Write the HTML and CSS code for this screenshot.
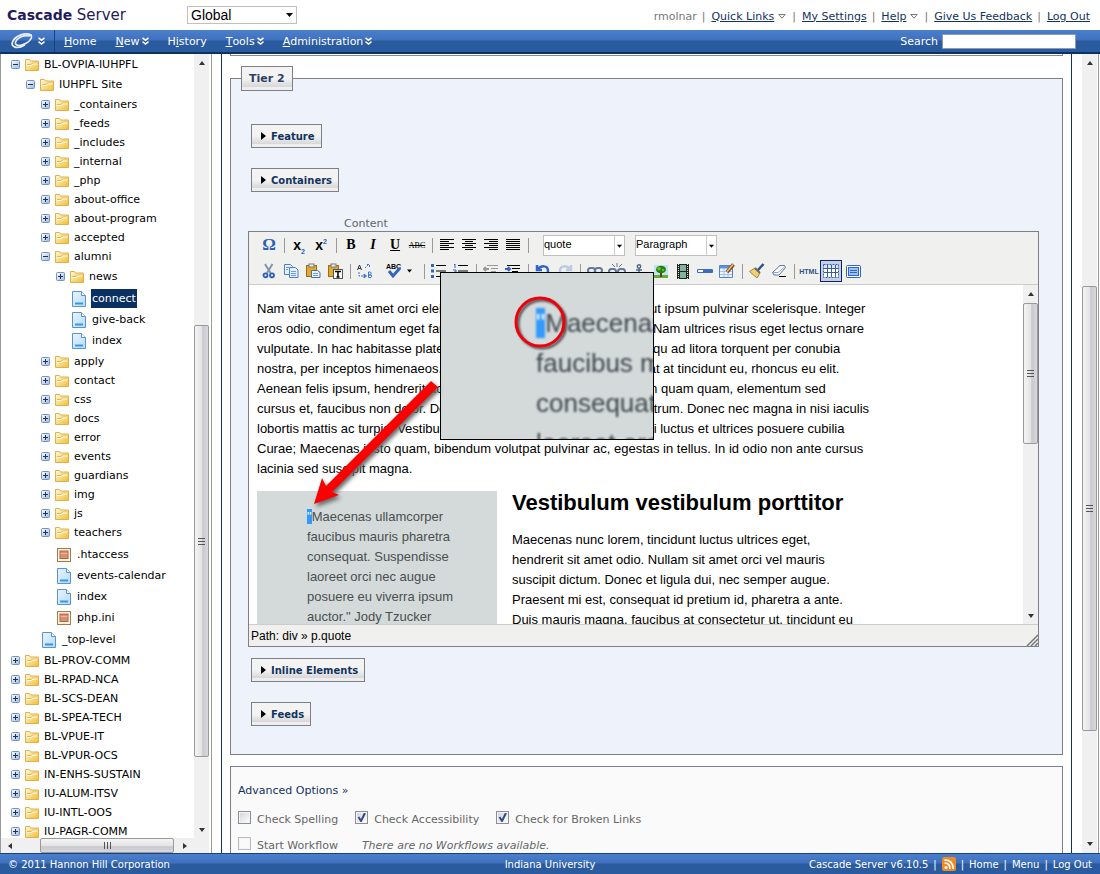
FILE: index.html
```html
<!DOCTYPE html>
<html lang="en">
<head>
    <meta charset="utf-8">
    <title>Cascade Server</title>
    <link rel="stylesheet" href="styles.css">
</head>
<body>
    <!-- shared icons -->
    <svg class="sprite" aria-hidden="true">
        <defs>
            <linearGradient id="gFolder" x1="0" y1="0" x2="1" y2="1"><stop offset="0" stop-color="#fffbe0"/><stop offset="1" stop-color="#f3bd2e"/></linearGradient>
            <linearGradient id="gBox" x1="0" y1="0" x2="1" y2="1"><stop offset="0" stop-color="#fff"/><stop offset="1" stop-color="#9db9dd"/></linearGradient>
            <linearGradient id="gPage" x1="0" y1="0" x2="1" y2="1"><stop offset="0" stop-color="#e8f4ff"/><stop offset="1" stop-color="#b9dbfa"/></linearGradient>
        </defs>
        <symbol id="plus" viewBox="0 0 9 9"><rect x=".5" y=".5" width="8" height="8" rx="1" fill="url(#gBox)" stroke="#7891b5"/><path d="M2 4.500h5M4.500 2v5" stroke="#14336b"/></symbol>
        <symbol id="minus" viewBox="0 0 9 9"><rect x=".5" y=".5" width="8" height="8" rx="1" fill="url(#gBox)" stroke="#7891b5"/><path d="M2 4.500h5" stroke="#14336b"/></symbol>
        <symbol id="folder" viewBox="0 0 14 12"><path d="M.5 11.500v-11h4l1 1.500h8v9.500z" fill="url(#gFolder)" stroke="#dfb04e"/><path d="M2 5.500h4l1.500-1.500h4" fill="none" stroke="#e9b845"/><path d="M2 6.500h4.500l1.500-1.500h4" fill="none" stroke="#fff"/></symbol>
        <symbol id="page" viewBox="0 0 14 16"><path d="M.5 .5h9l4 4v11h-13z" fill="url(#gPage)" stroke="#5b93d0"/><path d="M9.500 .5v4h4" fill="#fff" stroke="#5b93d0"/><path d="M3 12.500h8" stroke="#2f9be6" stroke-width="2"/></symbol>
        <symbol id="file" viewBox="0 0 14 14"><rect x=".5" y=".5" width="13" height="13" fill="#fdf3df" stroke="#a8784e"/><rect x="3" y="3" width="8" height="7.500" fill="#dd8f6c" stroke="#a86c4e"/><path d="M3.500 5.500h7" stroke="#efb79b"/></symbol>
        <symbol id="chev" viewBox="0 0 7 8"><path d="M.5 .8l3 2.400 3-2.400M.5 4.600l3 2.400 3-2.400" fill="none" stroke="#fff" stroke-width="1.500"/></symbol>
        <symbol id="tri" viewBox="0 0 8 5"><path d="M.8 .5h6.400L4 4.200z" fill="#fff" stroke="#777"/></symbol>
        <symbol id="arrow" viewBox="0 0 7 4"><path d="M0 0h7L3.500 4z"/></symbol>
    </svg>

    <header class="header">
        <div class="logo"><b>Cascade</b> <span>Server</span></div>
        <select class="site-select" aria-label="Site"><option>Global</option></select>
        <nav class="user-links">
            <span>rmolnar</span><i>|</i><a href="#">Quick Links</a><svg class="tri"><use href="#tri"/></svg><i>|</i><a href="#">My Settings</a><i>|</i><a href="#">Help</a><svg class="tri"><use href="#tri"/></svg><i>|</i><a href="#">Give Us Feedback</a><i>|</i><a href="#">Log Out</a>
        </nav>
    </header>

    <div class="menubar">
        <a class="brand" href="#" aria-label="Cascade menu">
            <svg width="23" height="17" viewBox="0 0 23 17"><g fill="none" stroke="#e8eefb" stroke-linecap="round"><path d="M20 2C14-1 4 3 1.500 9c-2 6 6 7 12 3" stroke-width="1.800"/><path d="M18 3C12 2 6 5 4.500 9c-1 4 5 4.500 10 1.500 6-3 8-8 4-9" stroke-width="1.600"/><path d="M8 5c4-3 10-4 12-2" stroke-width="1"/></g></svg>
            <svg class="chev"><use href="#chev"/></svg>
        </a>
        <nav class="menu">
            <a href="#"><u>H</u>ome</a>
            <a href="#"><u>N</u>ew <svg class="chev"><use href="#chev"/></svg></a>
            <a href="#">H<u>i</u>story</a>
            <a href="#"><u>T</u>ools <svg class="chev"><use href="#chev"/></svg></a>
            <a href="#"><u>A</u>dministration <svg class="chev"><use href="#chev"/></svg></a>
        </nav>
        <label for="search">Search</label>
        <input id="search" class="search" type="text">
    </div>

    <div class="main">
        <aside class="sidebar">
            <div class="tree-wrap">
                <ul class="tree">
                    <li><a href="#"><svg class="tg"><use href="#minus"/></svg><svg class="fd"><use href="#folder"/></svg>BL-OVPIA-IUHPFL</a>
                        <ul>
                            <li><a href="#"><svg class="tg"><use href="#minus"/></svg><svg class="fd"><use href="#folder"/></svg>IUHPFL Site</a>
                                <ul>
                                    <li><a href="#"><svg class="tg"><use href="#plus"/></svg><svg class="fd"><use href="#folder"/></svg>_containers</a></li>
                                    <li><a href="#"><svg class="tg"><use href="#plus"/></svg><svg class="fd"><use href="#folder"/></svg>_feeds</a></li>
                                    <li><a href="#"><svg class="tg"><use href="#plus"/></svg><svg class="fd"><use href="#folder"/></svg>_includes</a></li>
                                    <li><a href="#"><svg class="tg"><use href="#plus"/></svg><svg class="fd"><use href="#folder"/></svg>_internal</a></li>
                                    <li><a href="#"><svg class="tg"><use href="#plus"/></svg><svg class="fd"><use href="#folder"/></svg>_php</a></li>
                                    <li><a href="#"><svg class="tg"><use href="#plus"/></svg><svg class="fd"><use href="#folder"/></svg>about-office</a></li>
                                    <li><a href="#"><svg class="tg"><use href="#plus"/></svg><svg class="fd"><use href="#folder"/></svg>about-program</a></li>
                                    <li><a href="#"><svg class="tg"><use href="#plus"/></svg><svg class="fd"><use href="#folder"/></svg>accepted</a></li>
                                    <li><a href="#"><svg class="tg"><use href="#minus"/></svg><svg class="fd"><use href="#folder"/></svg>alumni</a>
                                        <ul>
                                            <li><a href="#"><svg class="tg"><use href="#plus"/></svg><svg class="fd"><use href="#folder"/></svg>news</a></li>
                                            <li class="leaf first"><a href="#"><svg class="pg"><use href="#page"/></svg><span class="selected">connect</span></a></li>
                                            <li class="leaf"><a href="#"><svg class="pg"><use href="#page"/></svg><span>give-back</span></a></li>
                                            <li class="leaf"><a href="#"><svg class="pg"><use href="#page"/></svg><span>index</span></a></li>
                                        </ul>
                                    </li>
                                    <li><a href="#"><svg class="tg"><use href="#plus"/></svg><svg class="fd"><use href="#folder"/></svg>apply</a></li>
                                    <li><a href="#"><svg class="tg"><use href="#plus"/></svg><svg class="fd"><use href="#folder"/></svg>contact</a></li>
                                    <li><a href="#"><svg class="tg"><use href="#plus"/></svg><svg class="fd"><use href="#folder"/></svg>css</a></li>
                                    <li><a href="#"><svg class="tg"><use href="#plus"/></svg><svg class="fd"><use href="#folder"/></svg>docs</a></li>
                                    <li><a href="#"><svg class="tg"><use href="#plus"/></svg><svg class="fd"><use href="#folder"/></svg>error</a></li>
                                    <li><a href="#"><svg class="tg"><use href="#plus"/></svg><svg class="fd"><use href="#folder"/></svg>events</a></li>
                                    <li><a href="#"><svg class="tg"><use href="#plus"/></svg><svg class="fd"><use href="#folder"/></svg>guardians</a></li>
                                    <li><a href="#"><svg class="tg"><use href="#plus"/></svg><svg class="fd"><use href="#folder"/></svg>img</a></li>
                                    <li><a href="#"><svg class="tg"><use href="#plus"/></svg><svg class="fd"><use href="#folder"/></svg>js</a></li>
                                    <li><a href="#"><svg class="tg"><use href="#plus"/></svg><svg class="fd"><use href="#folder"/></svg>teachers</a></li>
                                    <li class="leaf first"><a href="#"><svg class="pg"><use href="#file"/></svg><span>.htaccess</span></a></li>
                                    <li class="leaf"><a href="#"><svg class="pg"><use href="#page"/></svg><span>events-calendar</span></a></li>
                                    <li class="leaf"><a href="#"><svg class="pg"><use href="#page"/></svg><span>index</span></a></li>
                                    <li class="leaf"><a href="#"><svg class="pg"><use href="#file"/></svg><span>php.ini</span></a></li>
                                </ul>
                            </li>
                            <li class="leaf"><a href="#"><svg class="pg"><use href="#page"/></svg><span>_top-level</span></a></li>
                        </ul>
                    </li>
                    <li><a href="#"><svg class="tg"><use href="#plus"/></svg><svg class="fd"><use href="#folder"/></svg>BL-PROV-COMM</a></li>
                    <li><a href="#"><svg class="tg"><use href="#plus"/></svg><svg class="fd"><use href="#folder"/></svg>BL-RPAD-NCA</a></li>
                    <li><a href="#"><svg class="tg"><use href="#plus"/></svg><svg class="fd"><use href="#folder"/></svg>BL-SCS-DEAN</a></li>
                    <li><a href="#"><svg class="tg"><use href="#plus"/></svg><svg class="fd"><use href="#folder"/></svg>BL-SPEA-TECH</a></li>
                    <li><a href="#"><svg class="tg"><use href="#plus"/></svg><svg class="fd"><use href="#folder"/></svg>BL-VPUE-IT</a></li>
                    <li><a href="#"><svg class="tg"><use href="#plus"/></svg><svg class="fd"><use href="#folder"/></svg>BL-VPUR-OCS</a></li>
                    <li><a href="#"><svg class="tg"><use href="#plus"/></svg><svg class="fd"><use href="#folder"/></svg>IN-ENHS-SUSTAIN</a></li>
                    <li><a href="#"><svg class="tg"><use href="#plus"/></svg><svg class="fd"><use href="#folder"/></svg>IU-ALUM-ITSV</a></li>
                    <li><a href="#"><svg class="tg"><use href="#plus"/></svg><svg class="fd"><use href="#folder"/></svg>IU-INTL-OOS</a></li>
                    <li><a href="#"><svg class="tg"><use href="#plus"/></svg><svg class="fd"><use href="#folder"/></svg>IU-PAGR-COMM</a></li>
                </ul>
                <div class="vscroll side-scroll"><span class="up"></span><span class="thumb"></span><span class="down"></span></div>
            </div>
            <div class="hscroll"><span class="left"></span><span class="thumb"></span><span class="right"></span></div>
        </aside>

        <div class="content">
            <div class="panel">
                <div class="tier-end"></div>

                <fieldset class="tier">
                    <legend>Tier 2</legend>
                    <button type="button" class="toggle">Feature</button>
                    <button type="button" class="toggle">Containers</button>
                    <div class="field-label" id="contentLabel">Content</div>

                    <div class="editor" aria-labelledby="contentLabel">
                        <div class="toolbar">
                            <div class="row">
                                <button type="button" class="omega" aria-label="Special character">Ω</button>
                                <span class="sep"></span>
                                <button type="button" class="script" aria-label="Subscript">x<sub>2</sub></button>
                                <button type="button" class="script" aria-label="Superscript">x<sup>2</sup></button>
                                <span class="sep"></span>
                                <button type="button" class="fmt"><b>B</b></button>
                                <button type="button" class="fmt"><i>I</i></button>
                                <button type="button" class="fmt"><u>U</u></button>
                                <button type="button" class="strike"><s>ABC</s></button>
                                <span class="sep"></span>
                                <button type="button" aria-label="Align left"><svg width="16" height="12"><path d="M1 .5h14M1 2.500h9M1 4.500h14M1 6.500h9M1 8.500h14M1 10.500h9" stroke="#000"/></svg></button>
                                <button type="button" aria-label="Align center"><svg width="16" height="12"><path d="M1 .5h14M4 2.500h8M1 4.500h14M4 6.500h8M1 8.500h14M4 10.500h8" stroke="#000"/></svg></button>
                                <button type="button" aria-label="Align right"><svg width="16" height="12"><path d="M1 .5h14M6 2.500h9M1 4.500h14M6 6.500h9M1 8.500h14M6 10.500h9" stroke="#000"/></svg></button>
                                <button type="button" aria-label="Justify"><svg width="16" height="12"><path d="M1 .5h14M1 2.500h14M1 4.500h14M1 6.500h14M1 8.500h14M1 10.500h14" stroke="#000"/></svg></button>
                                <span class="sep"></span>
                                <select aria-label="Style"><option>quote</option></select>
                                <select aria-label="Format"><option>Paragraph</option></select>
                            </div>
                            <div class="row">
                                <button type="button" aria-label="Cut"><svg width="16" height="16"><path d="M4 1l5.500 9M11.500 1L6 10" stroke="#8494ab" stroke-width="2"/><g fill="none" stroke="#2b5cbd" stroke-width="1.800"><circle cx="4.500" cy="12.300" r="2"/><circle cx="11" cy="12.300" r="2"/></g></svg></button>
                                <button type="button" aria-label="Copy"><svg width="16" height="16"><g fill="#e6f0ff" stroke="#4b7fcc"><path d="M1.500 1.500h6l2 2v8h-8z"/><path d="M6.500 4.500h6l2.500 2.500v7.500H6.500z"/></g><path d="M3 4.500h3M3 6.500h2M8 8.500h5M8 10.500h5M8 12.500h5" stroke="#6c9be0"/></svg></button>
                                <button type="button" aria-label="Paste"><svg width="16" height="16"><rect x="1.500" y="2.500" width="10" height="11" fill="#e3a92c" stroke="#94701d"/><rect x="4" y="1" width="5" height="3" fill="#eee" stroke="#777"/><path d="M6.500 7.500h6l2.500 2v5H6.500z" fill="#e9f2ff" stroke="#4b6fa8"/><path d="M8 10.500h5M8 12.500h5" stroke="#6c9be0"/></svg></button>
                                <button type="button" aria-label="Paste as text"><svg width="16" height="16"><rect x="1.500" y="2.500" width="10" height="11" fill="#e3a92c" stroke="#94701d"/><rect x="4" y="1" width="5" height="3" fill="#eee" stroke="#777"/><rect x="6.500" y="6.500" width="9" height="9" fill="#fff" stroke="#555"/><path d="M8 8.500h6M11 8v6M9.500 14h3" stroke="#000" stroke-width="1.500"/></svg></button>
                                <span class="sep"></span>
                                <button type="button" aria-label="Find and replace"><svg width="18" height="16" fill="none" stroke="#3e74cf"><path d="M1.500 7l2-5 2 5M2.200 5.500h2.600" stroke="#334"/><path d="M12.500 9v5.500h2.500q1.500-1.500 0-2.500h-2.500h2q1.500-1.500 0-3z"/><path d="M3 9v4h5" stroke-dasharray="2 1"/><path d="M9 5l3-3M11 1.500h2.500V5" stroke-dasharray="2 1"/><path d="M8 11l2.500 2L8 15z" fill="#3e74cf"/></svg></button>
                                <button type="button" class="wide" aria-label="Spell check"><svg width="18" height="18"><text x="1" y="7" class="abc">ABC</text><path d="M4 9l4 5 7-8" fill="none" stroke="#3465bd" stroke-width="3"/></svg><svg class="drop"><use href="#arrow"/></svg></button>
                                <span class="sep"></span>
                                <button type="button" aria-label="Bullets"><svg width="16" height="14"><path d="M0 1.500h3M0 7h3M0 12.500h3" stroke="#3465bd" stroke-width="3"/><path d="M5 1.500h10M5 7h10M5 12.500h10" stroke="#000"/></svg></button>
                                <button type="button" aria-label="Numbering"><svg width="16" height="14"><path d="M2 0v4M1 .5h1M0 6h3v2H1v2h3" fill="none" stroke="#3465bd"/><path d="M5 1.500h10M5 7h10M5 12.500h10" stroke="#000"/></svg></button>
                                <span class="sep"></span>
                                <button type="button" aria-label="Outdent"><svg width="16" height="14" stroke="#999"><path d="M4 1.500h11M8 4.500h7M8 7.500h5M2 10.500h13"/><path d="M6 5H1m2-2L1 5l2 2" fill="none" stroke-width="2"/></svg></button>
                                <button type="button" aria-label="Indent"><svg width="16" height="14" stroke="#000"><path d="M2 1.500h13M7 4.500h8M7 7.500h6M2 10.500h13"/><path d="M0 5h5M3 3l2 2-2 2" fill="none" stroke="#3465bd" stroke-width="2"/></svg></button>
                                <span class="sep"></span>
                                <button type="button" aria-label="Undo"><svg width="16" height="14" fill="none" stroke="#2f66c8" stroke-width="2.500"><path d="M2 1v5h5M2 6c4-5 11-5 11 1q0 4-4 5"/></svg></button>
                                <button type="button" aria-label="Redo"><svg width="16" height="14" fill="none" stroke="#bccbe3" stroke-width="2.500"><path d="M14 1v5H9M14 6C10 1 3 1 3 7q0 4 4 5"/></svg></button>
                                <span class="sep"></span>
                                <button type="button" aria-label="Link"><svg width="16" height="14" fill="none" stroke="#64799a" stroke-width="2"><rect x="1" y="4" width="7" height="5" rx="2.500"/><rect x="8" y="4" width="7" height="5" rx="2.500"/></svg></button>
                                <button type="button" aria-label="Unlink"><svg width="18" height="16" fill="none" stroke="#64799a" stroke-width="2"><rect x="1" y="6" width="7" height="5" rx="2.500"/><rect x="10" y="6" width="7" height="5" rx="2.500"/><path d="M4 1l3 3M9 0v4M14 1l-3 3" stroke-width="1"/></svg></button>
                                <button type="button" aria-label="Anchor"><svg width="14" height="14" fill="none" stroke="#51688e" stroke-width="1.500"><circle cx="7" cy="2.500" r="1.700"/><path d="M7 4v9M4 6h6M1 8q1 5 6 5t6-5"/></svg></button>
                                <button type="button" aria-label="Image"><svg width="14" height="13"><path fill="#c3e2f5" d="M0 0h14v13H0z"/><path fill="#62ac32" d="M0 10h14v3H0z"/><path d="M7 6v6" stroke="#6a3b12" stroke-width="2"/><ellipse cx="7" cy="4.500" rx="5" ry="3.800" fill="#25820d"/><circle cx="5" cy="3.800" r="1.800" fill="#6cc039"/><circle cx="9" cy="5" r="1.300" fill="#5eb52f"/></svg></button>
                                <button type="button" aria-label="Media"><svg width="12" height="15"><path fill="#222" d="M0 0h12v15H0z"/><path d="M1.500 0v15M10.500 0v15" stroke="#ddd" stroke-dasharray="1 1"/><path fill="#7fb59b" d="M3 1h6v6H3zM3 8h6v6H3z"/></svg></button>
                                <button type="button" aria-label="Horizontal rule"><svg width="16" height="6"><path d="M.5 1.500h15v3H.5z" fill="#fff" stroke="#3a6cc4"/><path fill="#3a6cc4" d="M6 1h9v4H6z"/></svg></button>
                                <button type="button" aria-label="Table"><svg width="16" height="16"><path d="M.5 2.500h13v12H.5z" fill="#eef5ff" stroke="#5583cb"/><path fill="#5e90df" d="M1 3h12v2.500H1z"/><path d="M1 8.500h12M1 11.500h12M5 5v9M9 5v9" stroke="#a5c0ea"/><path d="M14.500 1.500L8 9" stroke="#7a4a22" stroke-width="3.500"/><path d="M14 1.500L8 8.500" stroke="#f0c36e" stroke-width="1.500"/></svg></button>
                                <span class="sep"></span>
                                <button type="button" aria-label="Clean up"><svg width="16" height="16"><path d="M14.500 1L9 7" stroke="#2c4f93" stroke-width="2.500"/><path d="M6 5l5 5-3 5L.5 8.500z" fill="#efd171" stroke="#a18633"/><path d="M6 5l5 5" stroke="#666" stroke-width="2"/></svg></button>
                                <button type="button" aria-label="Remove formatting"><svg width="16" height="14"><path d="M9 1.500h4.500l1 2-6.500 7.500H3L1.500 8.500z" fill="#fff" stroke="#5d75a5"/><path d="M2 8.500h5l7-6" fill="none" stroke="#91a5cc"/><path d="M8 12.500h7" stroke="#000"/></svg></button>
                                <span class="sep"></span>
                                <button type="button" class="html">HTML</button>
                                <button type="button" class="active" aria-label="Guidelines"><svg width="16" height="14"><path d="M.5 .5h15v13H.5z" fill="#fff" stroke="#3d5f9c" stroke-dasharray="2 1"/><path d="M1 1h14v3H1z" fill="#d5e3fa"/><path d="M1 4.500h14M1 8.500h14M4.500 1v12M8.500 1v12M12.500 1v12" stroke="#3d5f9c"/></svg></button>
                                <button type="button" aria-label="Full screen"><svg width="15" height="13"><rect x=".5" y=".5" width="14" height="12" rx="1" fill="#fff" stroke="#2e66c1"/><rect x="2.500" y="2.500" width="10" height="8" fill="#9cc0f5" stroke="#2e66c1"/><path d="M4 5.500h7M4 7.500h7" stroke="#2e66c1"/></svg></button>
                            </div>
                        </div>

                        <div class="doc-wrap">
                            <div class="doc">
                                <p>Nam vitae ante sit amet orci eleifend tristique. Integer sed at magna ut ipsum pulvinar scelerisque. Integer<br>
                                eros odio, condimentum eget faucibus vitae, fermentum vitae ac elit. Nam ultrices risus eget lectus ornare<br>
                                vulputate. In hac habitasse platea dictumst. Class aptent taciti sociosqu ad litora torquent per conubia<br>
                                nostra, per inceptos himenaeos. Praesent tellus nisl, faucibus volutpat at tincidunt eu, rhoncus eu elit.<br>
                                Aenean felis ipsum, hendrerit ac dapibus sed, aliquam in augue. Nam quam quam, elementum sed<br>
                                cursus et, faucibus non dolor. Donec at mauris sed id lacus dictum rutrum. Donec nec magna in nisi iaculis<br>
                                lobortis mattis ac turpis. Vestibulum ante ipsum primis in faucibus orci luctus et ultrices posuere cubilia<br>
                                Curae; Maecenas justo quam, bibendum volutpat pulvinar ac, egestas in tellus. In id odio non ante cursus<br>
                                lacinia sed suscipit magna.</p>
                                <div class="columns">
                                    <blockquote><mark>"</mark>Maecenas ullamcorper<br>faucibus mauris pharetra<br>consequat. Suspendisse<br>laoreet orci nec augue<br>posuere eu viverra ipsum<br>auctor." Jody Tzucker</blockquote>
                                    <div>
                                        <h2>Vestibulum vestibulum porttitor</h2>
                                        <p>Maecenas nunc lorem, tincidunt luctus ultrices eget,<br>
                                        hendrerit sit amet odio. Nullam sit amet orci vel mauris<br>
                                        suscipit dictum. Donec et ligula dui, nec semper augue.<br>
                                        Praesent mi est, consequat id pretium id, pharetra a ante.<br>
                                        Duis mauris magna, faucibus at consectetur ut, tincidunt eu</p>
                                    </div>
                                </div>
                            </div>
                            <div class="vscroll doc-scroll"><span class="up"></span><span class="thumb"></span><span class="down"></span></div>
                        </div>

                        <div class="path">Path: div » p.quote
                            <svg width="12" height="12"><path d="M1 12L12 1M5 12l7-7M9 12l3-3" stroke="#777" stroke-width="1.500"/></svg>
                        </div>

                        <!-- magnified view of the selected quote mark -->
                        <div class="callout">
                            <div class="zoomed"><mark>"</mark>Maecenas<br>faucibus mauris<br>consequat.<br>laoreet orci</div>
                            <svg width="60" height="60"><circle cx="30" cy="30" r="24" fill="none" stroke="#f0000b" stroke-width="3"/></svg>
                        </div>
                        <svg class="pointer" width="136" height="142"><path d="M123 10l7 6L24 121l7 3-25 9 8-26 4 8z" fill="#fb0000"/></svg>
                    </div>

                    <button type="button" class="toggle">Inline Elements</button>
                    <button type="button" class="toggle">Feeds</button>
                </fieldset>

                <div class="options">
                    <a href="#">Advanced Options »</a>
                    <div class="checks">
                        <label><input type="checkbox">Check Spelling</label>
                        <label><input type="checkbox" checked>Check Accessibility</label>
                        <label><input type="checkbox" checked>Check for Broken Links</label>
                    </div>
                    <div class="checks workflow">
                        <label><input type="checkbox" disabled>Start Workflow</label>
                        <em>There are no Workflows available.</em>
                    </div>
                </div>
            </div>
            <div class="vscroll page-scroll"><span class="up"></span><span class="thumb"></span><span class="down"></span></div>
        </div>
    </div>

    <footer class="footer">
        <span>© 2011 Hannon Hill Corporation</span>
        <span class="org">Indiana University</span>
        <span class="foot-links">Cascade Server v6.10.5 <i>|</i>
            <svg width="14" height="14"><rect width="14" height="14" rx="2" fill="#f08a24"/><circle cx="4" cy="10.500" r="1.500" fill="#fff"/><path d="M2.500 6q5.500 0 5.500 6M2.500 2.800Q11 3 11.200 12" fill="none" stroke="#fff" stroke-width="1.700"/></svg>
            <i>|</i> <a href="#">Home</a> <i>|</i> <a href="#">Menu</a> <i>|</i> <a href="#">Log Out</a></span>
    </footer>
</body>
</html>
```

FILE: styles.css
```css
* {
    box-sizing: border-box;
}
body {
    margin: 0;
    height: 100vh;
    display: flex;
    flex-direction: column;
    overflow: hidden;
    font-family: "DejaVu Sans", Verdana, sans-serif;
    font-size: 11px;
    color: #000;
    background-color: #fff;
}
svg {
    display: block;
    flex: none;
}
.sprite {
    position: absolute;
    width: 0;
    height: 0;
}
button {
    font-family: inherit;
    cursor: pointer;
}

/* header */
.header {
    flex: none;
    height: 30px;
    display: flex;
    align-items: center;
    padding: 0 10px 0 7px;
}
.logo {
    width: 180px;
    font-size: 14px;
    color: #1f1a5e;
    white-space: nowrap;
}
.logo span {
    font-size: 15px;
}
select {
    appearance: none;
    border-radius: 0;
    border: 1px solid #c0c0c0;
    color: #000;
    font-family: "Liberation Sans", Arial, sans-serif;
    background: #fff url("data:image/svg+xml,%3Csvg xmlns='http://www.w3.org/2000/svg' width='7' height='4'%3E%3Cpath d='M0 0h7L3.500 4z'/%3E%3C/svg%3E") no-repeat right 3px center;
}
.site-select {
    width: 110px;
    height: 18px;
    padding: 0 3px;
    font-size: 14px;
}
.user-links {
    margin-left: auto;
    display: flex;
    align-items: center;
    color: #777;
    padding-top: 2px;
}
.user-links i {
    font-style: normal;
    margin: 0 6px 0 5px;
}
.user-links a {
    color: #12335f;
}
.tri {
    width: 8px;
    height: 5px;
    margin: 0 1px 0 4px;
}

/* menu bar */
.menubar {
    flex: none;
    height: 24px;
    display: flex;
    align-items: center;
    padding-right: 24px;
    color: #fff;
    background: linear-gradient(#4a7fcd 0, #3f70bd 10px, #2a5b9f 11px, #2a5b9f 20px);
    border-bottom: 2px solid #0b3265;
}
.menubar a {
    color: #fff;
    text-decoration: none;
    display: flex;
    align-items: center;
}
.brand {
    width: 55px;
    height: 22px;
    padding-left: 11px;
    gap: 4px;
    border-right: 1px solid #17427f;
}
.chev {
    width: 7px;
    height: 8px;
}
.menu {
    display: flex;
    gap: 19px;
    margin-left: 9px;
}
.menu .chev {
    margin-left: 2px;
}
.menubar label {
    margin-left: auto;
}
.search {
    width: 134px;
    height: 15px;
    margin-left: 4px;
    border: 1px solid #8b9cba;
    background-color: #fff;
}

/* scrollbars */
.vscroll {
    flex: none;
    width: 15px;
    display: grid;
    background-color: #f0f0f0;
}
.vscroll .thumb {
    grid-row: 3;
    border: 1px solid #999;
    border-radius: 2px;
    background: linear-gradient(#555, #555) center / 7px 1px no-repeat,
        linear-gradient(#555, #555) center calc(50% + 3px) / 7px 1px no-repeat,
        linear-gradient(#555, #555) center calc(50% - 3px) / 7px 1px no-repeat,
        linear-gradient(90deg, #f4f4f4, #e4e4e6 50%, #c8c8cd 60%, #d9d9dd);
}
.up, .down, .left, .right {
    place-self: center;
    border: 3px solid transparent;
}
.up {
    grid-row: 1;
    border-width: 0 3px 4px;
    border-bottom-color: #333;
}
.down {
    grid-row: 5;
    border-width: 4px 3px 0;
    border-top-color: #333;
}
.side-scroll {
    grid-template-rows: 17px 254fr 432fr 64fr 17px;
}
.doc-scroll {
    grid-template-rows: 17px 1fr 141fr 163fr 17px;
}
.page-scroll {
    grid-template-rows: 17px 215fr 444fr 105fr 17px;
}
.hscroll {
    height: 15px;
    margin-right: 2px;
    display: grid;
    grid-template-columns: 17px 22fr 134fr 1fr 34px;
    background-color: #f0f0f0;
}
.hscroll .thumb {
    grid-column: 3;
    border: 1px solid #999;
    border-radius: 2px;
    background: linear-gradient(#555, #555) center / 1px 7px no-repeat,
        linear-gradient(#555, #555) calc(50% + 3px) center / 1px 7px no-repeat,
        linear-gradient(#555, #555) calc(50% - 3px) center / 1px 7px no-repeat,
        linear-gradient(#f4f4f4, #e4e4e6 50%, #c8c8cd 60%, #d9d9dd);
}
.left {
    grid-column: 1;
    border-width: 3px 4px 3px 0;
    border-right-color: #333;
}
.right {
    grid-column: 5;
    justify-self: start;
    margin-left: 8px;
    border-width: 3px 0 3px 4px;
    border-left-color: #333;
}

/* asset tree */
.main {
    flex: 1;
    min-height: 0;
    display: flex;
}
.sidebar {
    flex: none;
    width: 212px;
    display: flex;
    flex-direction: column;
    border-left: 1px solid #999;
    border-right: 1px solid #999;
}
.tree-wrap {
    flex: 1;
    min-height: 0;
    display: flex;
    padding-right: 2px;
}
.tree {
    flex: 1;
    overflow: hidden;
    white-space: nowrap;
}
.tree, .tree ul {
    list-style: none;
    margin: 0;
    padding: 0;
}
.tree {
    padding: 1px 0 0 10px;
}
.tree ul {
    padding: 1px 0 1px 15px;
}
.tree a {
    height: 19px;
    display: flex;
    align-items: center;
    gap: 5px;
    color: #000;
    text-decoration: none;
}
.tg {
    width: 9px;
    height: 9px;
}
.fd {
    width: 14px;
    height: 12px;
}
.tree .leaf a {
    height: 21px;
    padding-left: 16px;
}
.tree .first {
    padding-top: 2px;
}
.pg {
    width: 14px;
    height: 16px;
}
.leaf span {
    padding: 3px 1px;
}
.leaf .selected {
    padding: 3px 1px;
    color: #fff;
    background-color: #0a2f61;
}

/* content */
.content {
    flex: 1;
    min-width: 0;
    display: flex;
    gap: 10px;
    margin: 0 1px 0 9px;
    padding-right: 1px;
    border-right: 1px solid #999;
}
.panel {
    flex: 1;
    min-width: 0;
    overflow: hidden;
    padding: 0 8px;
    border: 1px solid #12335f;
    border-width: 0 1px;
}
.tier-end {
    height: 2px;
    border: 1px solid #888;
    border-top: 0;
}
.tier {
    margin: 10px 0 11px;
    min-width: 0;
    padding: 33px 23px 28px 17px;
    border: 1px solid #7d8086;
    background-color: #edf2fb;
}
.tier legend {
    height: 25px;
    margin-left: -7px;
    padding: 0 7px;
    border: 1px solid #7d8086;
    line-height: 24px;
    font-size: 11px;
    font-weight: bold;
    color: #2c4066;
    background: linear-gradient(#f3f3f3 50%, #d8d8d8 85%, #eee 86%);
}
.toggle {
    display: flex;
    align-items: center;
    gap: 5px;
    height: 24px;
    margin: 0 0 20px 3px;
    padding: 0 6px 0 9px;
    border: 1px solid #7d8086;
    font-size: 10px;
    font-weight: bold;
    color: #12335f;
    background: linear-gradient(#f3f3f3 50%, #d8d8d8 85%, #eee 86%);
}
.toggle::before {
    content: "";
    border: 4px solid transparent;
    border-left: 5px solid #000;
    border-right: 0;
}
.toggle:last-child {
    margin-bottom: 0;
}
.field-label {
    margin: 25px 0 0 96px;
    line-height: 14px;
    color: #666;
}

/* editor */
.editor {
    position: relative;
    margin-bottom: 11px;
    border: 1px solid #7d8086;
    background-color: #f0f0ee;
    font-family: "Liberation Sans", Arial, sans-serif;
}
.toolbar {
    padding: 0 9px;
    border-bottom: 1px solid #ccc;
}
.row {
    display: flex;
    align-items: center;
    height: 26px;
}
.row button {
    flex: none;
    width: 22px;
    height: 22px;
    padding: 0;
    border: 0;
    background: none;
    display: flex;
    align-items: center;
    justify-content: center;
}
.row .wide {
    width: 44px;
    gap: 4px;
}
.drop {
    width: 5px;
    height: 4px;
}
.row .active {
    border: 1px solid #0a246a;
    background-color: #c6cfe4;
}
.sep {
    flex: none;
    width: 1px;
    height: 15px;
    margin: 0 3px 0 4px;
    background-color: #999;
}
.abc {
    font-size: 7px;
    font-weight: bold;
}
.row .omega {
    font-size: 17px;
    font-weight: bold;
    font-family: "Liberation Serif", serif;
    color: #2f5fb5;
}
.row .script {
    display: block;
    line-height: 20px;
    font-size: 14px;
    font-weight: bold;
}
.script sub, .script sup {
    font-size: 7px;
    line-height: 1;
    color: #2f5fb5;
}
.script sup {
    vertical-align: 6px;
}
.row .fmt {
    font-family: "Liberation Serif", serif;
    font-size: 14px;
    font-weight: bold;
}
.row .strike {
    font-family: "Liberation Serif", serif;
    font-size: 8px;
}
.row .html {
    font-size: 7px;
    font-weight: bold;
    color: #33507f;
}
.row select {
    width: 82px;
    height: 21px;
    margin-left: 10px;
    padding: 0 0 3px;
    font-size: 11px;
    background-image: url("data:image/svg+xml,%3Csvg xmlns='http://www.w3.org/2000/svg' width='10' height='20'%3E%3Cpath d='M0 0h1v20H0z' fill='%23ccc'/%3E%3Cpath d='M3 9h5L5.500 12z'/%3E%3C/svg%3E");
    background-position: right 0 center;
}
.row .sep + select {
    margin-left: 11px;
}
.doc-wrap {
    display: flex;
    height: 339px;
    background-color: #fff;
}
.doc {
    flex: 1;
    min-width: 0;
    overflow: hidden;
    padding: 14px 8px 0;
    font-size: 13px;
    line-height: 20px;
    white-space: nowrap;
}
.doc p {
    margin: 0;
}
.columns {
    display: flex;
    gap: 15px;
    margin-top: 12px;
}
.columns h2 {
    margin: 0 0 15px;
    font-size: 22px;
    line-height: 24px;
}
blockquote {
    flex: none;
    width: 240px;
    margin: 0;
    padding: 16px 0 20px 50px;
    color: #4a4f50;
    background-color: #d3dad9;
}
mark {
    color: #fff;
    background-color: #3399ff;
}
.path {
    display: flex;
    justify-content: space-between;
    align-items: flex-end;
    height: 22px;
    padding-left: 2px;
    border-top: 1px solid #ccc;
    font-size: 12px;
    line-height: 20px;
}
.callout {
    position: absolute;
    left: 191px;
    top: 40px;
    width: 214px;
    height: 168px;
    overflow: hidden;
    border: 1px solid #000;
    background-color: #d3dad9;
}
.zoomed {
    padding: 30px 0 0 95px;
    font-size: 26px;
    line-height: 40px;
    white-space: nowrap;
    color: #3f464f;
    filter: blur(1px);
}
.callout svg {
    position: absolute;
    left: 69px;
    top: 19px;
    filter: drop-shadow(2px 2px 1px #555);
}
.pointer {
    position: absolute;
    left: 59px;
    top: 139px;
    filter: drop-shadow(2px 3px 2px #666);
}

/* submit options */
.options {
    height: 120px;
    padding: 16px 7px;
    border: 1px solid #7d8086;
    background-color: #fafafa;
    color: #666;
}
.options a {
    color: #12335f;
    text-decoration: none;
    line-height: 16px;
}
.checks {
    display: flex;
    gap: 17px;
    margin-top: 12px;
}
.workflow {
    gap: 24px;
    margin-top: 9px;
}
.checks label {
    display: flex;
    gap: 6px;
}
.checks label, .checks em {
    line-height: 17px;
    white-space: nowrap;
}
.checks input {
    appearance: none;
    width: 13px;
    height: 13px;
    margin: 0;
    border: 1px solid #8a8f94;
    background: linear-gradient(135deg, #cfd3d8, #fff);
    box-shadow: inset 0 0 0 1px #f4f4f4;
}
.checks input:checked {
    background: url("data:image/svg+xml,%3Csvg xmlns='http://www.w3.org/2000/svg' width='11' height='11'%3E%3Cpath d='M2.500 5l2.500 4 4-8' fill='none' stroke='%23344a8c' stroke-width='2'/%3E%3C/svg%3E") center no-repeat, linear-gradient(135deg, #cfd3d8, #fff);
}
.checks input:disabled {
    border-color: #bbb;
    background: #fafafa;
}

/* footer */
.footer {
    flex: none;
    height: 21px;
    display: grid;
    grid-template-columns: 1fr auto 1fr;
    align-items: center;
    padding: 0 8px;
    border-top: 1px solid #17427f;
    font-size: 10px;
    color: #fff;
    background: linear-gradient(#4a7fcd 0, #3f70bd 9px, #2a5b9f 10px);
}
.foot-links {
    display: flex;
    align-items: center;
    justify-content: flex-end;
    gap: 5px;
}
.foot-links i {
    font-style: normal;
}
.footer a {
    color: #fff;
    text-decoration: none;
}
```
